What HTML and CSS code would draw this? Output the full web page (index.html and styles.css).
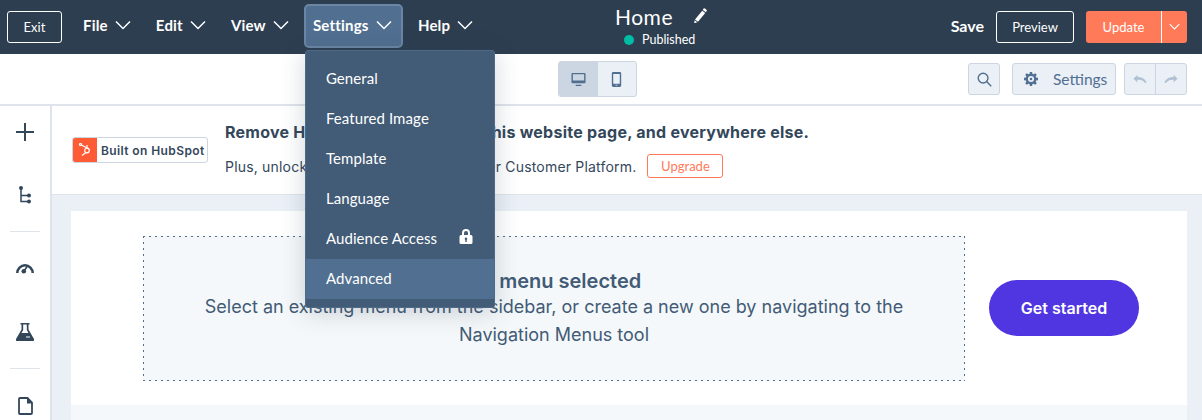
FILE: index.html
```html
<!DOCTYPE html>
<html lang="en">
<head>
<meta charset="utf-8">
<title>Home</title>
<link rel="stylesheet" href="styles.css">
</head>
<body>
<header class="topbar">
  <button class="btn-exit">Exit</button>
  <nav class="menus">
    <span class="menu-item">File <svg class="chev" viewBox="0 0 16 10"><path d="M1 1.500 8 8.500l7-7"/></svg></span>
    <span class="menu-item">Edit <svg class="chev" viewBox="0 0 16 10"><path d="M1 1.500 8 8.500l7-7"/></svg></span>
    <span class="menu-item">View <svg class="chev" viewBox="0 0 16 10"><path d="M1 1.500 8 8.500l7-7"/></svg></span>
    <div class="menu-wrap">
      <span class="menu-item menu-open">Settings <svg class="chev" viewBox="0 0 16 10"><path d="M1 1.500 8 8.500l7-7"/></svg></span>
      <ul class="dropdown">
        <li>General</li>
        <li>Featured Image</li>
        <li>Template</li>
        <li>Language</li>
        <li class="has-lock">Audience Access
          <svg class="lock" viewBox="0 0 14 15"><path fill-rule="evenodd" d="M3 6V4a4 4 0 0 1 8 0V6h1a1.500 1.500 0 0 1 1.500 1.500v6A1.500 1.500 0 0 1 12 15H2A1.500 1.500 0 0 1 .5 13.500v-6A1.500 1.500 0 0 1 2 6zM5 6h4V4a2 2 0 0 0-4 0zM7 8.500a1.300 1.300 0 0 0-.7 2.400V13h1.400V10.900A1.300 1.300 0 0 0 7 8.500z"/></svg>
        </li>
        <li class="active">Advanced</li>
      </ul>
    </div>
    <span class="menu-item">Help <svg class="chev" viewBox="0 0 16 10"><path d="M1 1.500 8 8.500l7-7"/></svg></span>
  </nav>
  <div class="title">
    <div class="title-row">
      <span class="title-text">Home</span>
      <svg class="pencil" viewBox="0 0 16 16"><path d="M12.400.6a1 1 0 0 1 1.400 0l1.600 1.200a1 1 0 0 1 .2 1.400l-.9 1.200-3.200-2.400zM10.900 2.800l3.200 2.400L6.400 14.600l-3.200-2.400zM2.800 13l2.800 2.100L2.300 16.400z"/></svg>
    </div>
    <div class="status"><i class="dot"></i>Published</div>
  </div>
  <div class="actions">
    <span class="save">Save</span>
    <button class="btn-preview">Preview</button>
    <div class="split">
      <span class="split-main">Update</span>
      <span class="split-caret"><svg class="chev small" viewBox="0 0 16 10"><path d="M1 1.500 8 8.500l7-7"/></svg></span>
    </div>
  </div>
</header>
<section class="toolbar">
  <div class="device">
    <span class="dev on"><svg viewBox="0 0 16 16" class="dev-ic"><path d="M1.500 1h13a1 1 0 0 1 1 1v9a1 1 0 0 1-1 1h-13a1 1 0 0 1-1-1V2a1 1 0 0 1 1-1zM2 2.500V9h12V2.500zM5 13.500h6V15H5z"/></svg></span>
    <span class="dev"><svg viewBox="0 0 16 16" class="dev-ic"><path fill-rule="evenodd" d="M4.500 0h7A1.500 1.500 0 0 1 13 1.500v13a1.500 1.500 0 0 1-1.500 1.500h-7A1.500 1.500 0 0 1 3 14.500v-13A1.500 1.500 0 0 1 4.500 0zM4.500 2v10.500h7V2zM7 13.500v1h2v-1z"/></svg></span>
  </div>
  <div class="tools">
    <span class="tool tool-search"><svg viewBox="0 0 16 16" class="stroke-ic"><circle cx="6.500" cy="6.500" r="5.200"/><path d="m10.200 10.200 5 5"/></svg></span>
    <span class="tool tool-settings"><svg viewBox="0 0 16 16" class="gear"><path fill-rule="evenodd" d="M6.700 0h2.600l.4 2.200 1.200.5 1.900-1.300 1.800 1.800-1.300 1.900.5 1.200 2.200.4v2.600l-2.200.4-.5 1.200 1.300 1.900-1.800 1.800-1.900-1.300-1.200.5-.4 2.200H6.700l-.4-2.200-1.200-.5-1.900 1.300-1.800-1.800 1.300-1.900-.5-1.200L0 9.300V6.700l2.200-.4.500-1.200L1.400 3.200l1.800-1.800 1.900 1.300 1.200-.5zM8 4.500a3.500 3.500 0 1 0 0 7 3.500 3.500 0 0 0 0-7zM8 6.500a1.500 1.500 0 1 1 0 3 1.500 1.500 0 0 1 0-3z"/></svg>Settings</span>
    <div class="undo">
      <span class="undo-b"><svg viewBox="0 0 16 12" class="hist"><path d="M5 .5.500 5 5 9V6.500c3.500-.4 6.500.5 8.700 3.500l1.800-.5C14 5.500 10 3 5 3.200z"/></svg></span>
      <span class="undo-b"><svg viewBox="0 0 16 12" class="hist flip"><path d="M5 .5.500 5 5 9V6.500c3.500-.4 6.500.5 8.700 3.500l1.800-.5C14 5.500 10 3 5 3.200z"/></svg></span>
    </div>
  </div>
</section>
<div class="workspace">
  <aside class="sidebar">
    <div class="side-group">
      <svg class="side-ic plus" viewBox="0 0 18 18"><path d="M9 0v18M0 9h18"/></svg>
      <svg class="side-ic tree" viewBox="0 0 14 20"><path class="ln" d="M2 3v13.500h8M2 10.500h8"/><circle cx="2" cy="3" r="2"/><circle cx="10" cy="10.500" r="2"/><circle cx="10" cy="16.500" r="2"/></svg>
    </div>
    <div class="side-group">
      <svg class="side-ic gauge" viewBox="0 0 18 12"><path class="ln2" d="M1.300 11a7.700 7.700 0 0 1 15.400 0"/><path class="ln" d="m8 9 3.500-5"/><circle cx="7.800" cy="9.200" r="2.300"/></svg>
      <svg class="side-ic flask" viewBox="0 0 18 18"><path d="M4.500 0h9v1.500H12.500v5L18 16a1.500 1.500 0 0 1-1.300 2H1.300A1.500 1.500 0 0 1 0 16l5.500-9.500v-5H4.500zM7.200 1.500v5.500L5.500 10h7L10.800 7V1.500zM10 13.500v1h4v-1z" fill-rule="evenodd"/></svg>
    </div>
    <div class="side-group last">
      <svg class="side-ic doc" viewBox="0 0 15 18"><path class="doc-line" d="M2 1h7.500L14 5.500V16a1 1 0 0 1-1 1H2a1 1 0 0 1-1-1V2a1 1 0 0 1 1-1z"/><path d="M9 1v5.500h5z"/></svg>
    </div>
  </aside>
  <main class="main">
    <section class="banner">
      <div class="badge">
        <span class="badge-logo"><svg viewBox="0 0 14 14"><path d="M9 5 3 1.800M8 9.500 4 12.500M9 2v3"/><circle cx="9" cy="7.500" r="2.300"/><circle cx="2.500" cy="1.500" r="1"/></svg></span>
        <span class="badge-text">Built on HubSpot</span>
      </div>
      <div class="banner-copy">
        <div class="banner-title">Remove HubSpot branding from this website page, and everywhere else.</div>
        <div class="banner-sub"><span>Plus, unlock more features with a Starter Customer Platform.</span><button class="btn-upgrade">Upgrade</button></div>
      </div>
    </section>
    <section class="canvas">
      <div class="card">
        <div class="placeholder">
          <div class="ph-title">No menu selected</div>
          <div class="ph-text">Select an existing menu from the sidebar, or create a new one by navigating to the Navigation Menus tool</div>
        </div>
        <button class="btn-start">Get started</button>
      </div>
      <div class="below"></div>
    </section>
  </main>
</div>
</body>
</html>
```

FILE: styles.css
```css
* { box-sizing: border-box; }
html, body { margin: 0; height: 420px; overflow: hidden; background: #fff; }
body { font-family: Lato, "Liberation Sans", sans-serif; color: #33475b; }
ul { margin: 0; padding: 0; list-style: none; }
button { font: inherit; cursor: pointer; }

.topbar { height: 54px; background: #2d3e50; display: flex; align-items: center; padding: 0 15px 0 7px; position: relative; color: #fff; }
.btn-exit { width: 55px; height: 32px; margin-top: -1px; background: transparent; border: 1px solid #fff; border-radius: 3px; color: #fff; font-size: 13px; padding: 0; }
.menus { display: flex; align-items: center; gap: 25px; margin: -2px 0 0 21px; }
.menu-item { display: inline-flex; align-items: center; height: 40px; padding-bottom: 2px; font-size: 15px; font-weight: 700; color: #fff; white-space: nowrap; letter-spacing: .2px; }
.chev { width: 16px; height: 10px; margin-left: 7px; fill: none; stroke: #fff; stroke-width: 1.500; }
.chev.small { width: 11px; height: 7px; margin: 0; }
.menu-wrap { position: relative; margin: 0 -10px; }
.menu-open { width: 99px; height: 44px; padding-left: 7px; background: #516f90; border: 2px solid #6a86a4; border-radius: 5px; }
.dropdown { position: absolute; top: 46px; left: 1px; z-index: 5; width: 190px; height: 258px; padding-top: 8px; background: #425b76; border: 1px solid #4f6a88; border-radius: 3px; box-shadow: 0 4px 24px rgba(45, 62, 80, .22); }
.dropdown li { height: 40px; display: flex; align-items: center; justify-content: space-between; padding: 0 21px 2px 20px; font-size: 15px; color: #fff; letter-spacing: .1px; }
.dropdown .active { background: #516f90; }
.lock { width: 14px; height: 15px; margin-bottom: 4px; fill: #fff; }
.title { position: absolute; left: 615px; top: 3px; width: 120px; }
.title-row { display: flex; align-items: center; height: 26px; }
.title-text { font-size: 21px; font-weight: 400; letter-spacing: .5px; }
.pencil { width: 15px; height: 15px; margin-left: 19px; margin-top: -2px; fill: #fff; }
.status { display: flex; align-items: center; margin: 3px 0 0 9px; font-size: 12.500px; color: #fff; }
.dot { width: 10px; height: 10px; border-radius: 50%; background: #00bda5; margin-right: 8px; }
.actions { margin-left: auto; display: flex; align-items: center; }
.save { font-size: 16px; font-weight: 700; margin-right: 12px; margin-top: -3px; }
.btn-preview { width: 78px; height: 32px; margin-top: -1px; background: transparent; border: 1px solid #fff; border-radius: 3px; color: #fff; font-size: 13px; padding: 0; }
.split { display: flex; height: 32px; margin-left: 12px; margin-top: -1px; border-radius: 3px; overflow: hidden; background: #ff7a59; }
.split-main { width: 75px; display: flex; align-items: center; justify-content: center; font-size: 13px; color: #fff; }
.split-caret { width: 26px; border-left: 1px solid #fff; display: flex; align-items: center; justify-content: center; }

.toolbar { height: 52px; border-bottom: 2px solid #dfe3eb; display: flex; align-items: center; position: relative; background: #fff; padding-right: 15px; }
.device { position: absolute; left: 558px; top: 7px; width: 79px; height: 36px; display: flex; border: 1px solid #cbd6e2; border-radius: 3px; background: #eaf0f6; overflow: hidden; }
.dev { flex: 1; display: flex; align-items: center; justify-content: center; }
.dev.on { background: #cbd6e2; }
.dev-ic { width: 15px; height: 15px; fill: #516f90; fill-rule: evenodd; }
.tools { margin-left: auto; display: flex; align-items: center; }
.tool { height: 32px; background: #eaf0f6; border: 1px solid #cbd6e2; border-radius: 3px; display: flex; align-items: center; justify-content: center; color: #516f90; font-size: 15.500px; }
.tool-search { width: 32px; margin-right: 12px; }
.stroke-ic { width: 15px; height: 15px; fill: none; stroke: #516f90; stroke-width: 1.500; }
.tool-settings { width: 104px; margin-right: 8px; justify-content: flex-start; padding-left: 11px; }
.gear { width: 14px; height: 14px; fill: #516f90; margin-right: 15px; }
.undo { display: flex; width: 63px; height: 32px; border: 1px solid #cbd6e2; border-radius: 3px; background: #eaf0f6; }
.undo-b { flex: 1; display: flex; align-items: center; justify-content: center; }
.undo-b + .undo-b { border-left: 1px solid #cbd6e2; }
.hist { width: 14px; height: 11px; fill: #b0c1d4; }
.flip { transform: scaleX(-1); }

.workspace { display: flex; height: 314px; }
.sidebar { width: 52px; flex: none; border-right: 2px solid #dfe3eb; background: #fff; overflow: hidden; }
.side-group { display: flex; flex-direction: column; align-items: center; margin: 0 10px; padding-top: 17px; border-bottom: 1px solid #dfe3eb; }
.side-group.last { border-bottom: 0; padding-top: 28px; }
.side-ic { display: block; fill: #33475b; flex: none; }
.plus { width: 18px; height: 18px; margin-bottom: 44px; fill: none; stroke: #33475b; stroke-width: 2; }
.tree { width: 14px; height: 20px; margin-bottom: 26px; margin-left: 1px; }
.ln { fill: none; stroke: #33475b; stroke-width: 1.500; }
.ln2 { fill: none; stroke: #33475b; stroke-width: 2.500; }
.gauge { width: 18px; height: 12px; margin-top: 13px; margin-bottom: 49px; }
.flask { width: 18px; height: 18px; margin-bottom: 27px; }
.doc { width: 15px; height: 18px; }
.doc-line { fill: none; stroke: #33475b; stroke-width: 1.800; }

.main { flex: 1; min-width: 0; background: #eaf0f6; display: flex; flex-direction: column; }
.banner { height: 89px; flex: none; background: #fff; border-bottom: 1px solid #dfe3eb; display: flex; align-items: center; padding-left: 20px; }
.badge { display: flex; align-items: center; width: 136px; height: 26px; border: 1px solid #cbd6e2; border-radius: 3px; overflow: hidden; background: #fff; font-family: Inter, sans-serif; }
.badge-logo { width: 24px; height: 24px; background: #ff5c35; display: flex; align-items: center; justify-content: center; }
.badge-logo svg { width: 14px; height: 14px; fill: none; stroke: #fff; stroke-width: 1.200; }
.badge-text { font-size: 12px; font-weight: 600; margin-left: 4px; letter-spacing: .4px; color: #33475b; white-space: nowrap; }
.banner-copy { margin-left: 17px; font-family: Inter, sans-serif; }
.banner-title { font-size: 16px; font-weight: 700; letter-spacing: .25px; color: #33475b; white-space: nowrap; }
.banner-sub { display: flex; align-items: center; margin-top: 12px; font-size: 14px; letter-spacing: .19px; color: #33475b; white-space: nowrap; }
.btn-upgrade { width: 76px; height: 24px; margin-left: 11px; background: #fff; border: 1px solid #ff7a59; border-radius: 3px; color: #ff7a59; font-family: Lato, sans-serif; font-size: 13px; letter-spacing: 0; padding: 0; }

.canvas { flex: 1; padding: 16px 15px 0 19px; display: flex; flex-direction: column; min-height: 0; }
.card { height: 194px; flex: none; background: #fff; display: flex; align-items: center; padding-left: 72px; }
.placeholder {
  width: 822px; height: 145px; margin-top: 1px;
  background-color: #f5f8fa;
  background-image:
    repeating-linear-gradient(90deg, #516f90 0 2px, transparent 2px 6px),
    repeating-linear-gradient(90deg, #516f90 0 2px, transparent 2px 6px),
    repeating-linear-gradient(180deg, #516f90 0 2px, transparent 2px 6px),
    repeating-linear-gradient(180deg, #516f90 0 2px, transparent 2px 6px);
  background-size: 100% 1px, 100% 1px, 1px 100%, 1px 100%;
  background-position: 0 0, 0 100%, 0 0, 100% 0;
  background-repeat: no-repeat;
  display: flex; flex-direction: column; align-items: center; justify-content: center;
  font-family: Inter, sans-serif; color: #425b76; text-align: center; padding: 0 40px;
}
.ph-title { font-size: 20px; font-weight: 600; line-height: 24px; }
.ph-text { font-size: 18px; line-height: 28px; }
.btn-start { width: 150px; height: 56px; margin-left: 24px; border: 0; border-radius: 28px; background: #4f36e0; color: #fff; font-family: Inter, sans-serif; font-size: 16px; font-weight: 600; padding: 0; }
.below { flex: 1; background: #f5f8fa; }
```
